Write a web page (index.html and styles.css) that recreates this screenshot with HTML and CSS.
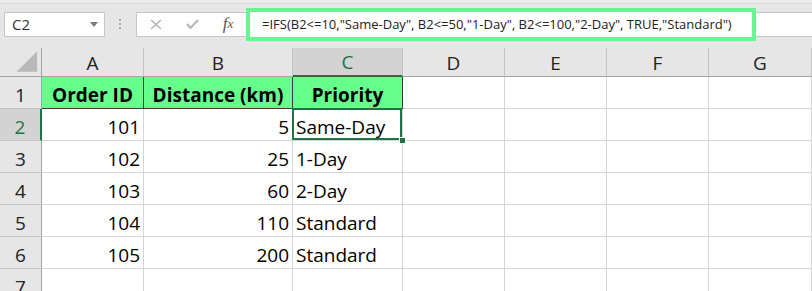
FILE: index.html
```html
<!DOCTYPE html>
<html lang="en">
<head>
  <meta charset="UTF-8">
  <title>IFS formula - Priority</title>
  <link rel="stylesheet" href="styles.css">
</head>
<body>
  <div class="topbar">
    <div class="namebox">
      <span>C2</span>
      <span class="caret"></span>
    </div>
    <div class="grip">
      <svg width="3" height="11" viewBox="0 0 3 11">
        <rect x="0" y="0" width="2" height="2" fill="#a8a8a8"/>
        <rect x="0" y="4" width="2" height="2" fill="#a8a8a8"/>
        <rect x="0" y="8" width="2" height="2" fill="#a8a8a8"/>
      </svg>
    </div>
    <div class="fbar">
      <div class="fbtns">
        <span class="fbtn">
          <svg width="12" height="11" viewBox="0 0 12 11">
            <path d="M1 1 L11 10 M11 1 L1 10" stroke="#b5b5b5" stroke-width="1.6" fill="none"/>
          </svg>
        </span>
        <span class="fbtn">
          <svg width="13" height="10" viewBox="0 0 13 10">
            <path d="M1 5 L4.5 9 L12 1" stroke="#b5b5b5" stroke-width="2" fill="none"/>
          </svg>
        </span>
        <span class="fbtn fx">f<small>x</small></span>
      </div>
      <div class="formula">=IFS(B2&lt;=10,"Same-Day", B2&lt;=50,"1-Day", B2&lt;=100,"2-Day", TRUE,"Standard")</div>
    </div>
  </div>

  <div class="sheet">
    <div class="corner">
      <svg width="42" height="28" viewBox="0 0 42 28">
        <polygon points="17,24 38,24 38,3" fill="#b8b8b8"/>
      </svg>
    </div>
    <div class="hd">A</div>
    <div class="hd">B</div>
    <div class="hd on">C</div>
    <div class="hd">D</div>
    <div class="hd">E</div>
    <div class="hd">F</div>
    <div class="hd">G</div>

    <div class="rh">1</div>
    <div class="head">Order ID</div>
    <div class="head">Distance (km)</div>
    <div class="head">Priority</div>
    <div></div><div></div><div></div><div></div>

    <div class="rh on">2</div>
    <div class="num">101</div>
    <div class="num">5</div>
    <div class="sel">Same-Day</div>
    <div></div><div></div><div></div><div></div>

    <div class="rh">3</div>
    <div class="num">102</div>
    <div class="num">25</div>
    <div>1-Day</div>
    <div></div><div></div><div></div><div></div>

    <div class="rh">4</div>
    <div class="num">103</div>
    <div class="num">60</div>
    <div>2-Day</div>
    <div></div><div></div><div></div><div></div>

    <div class="rh">5</div>
    <div class="num">104</div>
    <div class="num">110</div>
    <div>Standard</div>
    <div></div><div></div><div></div><div></div>

    <div class="rh">6</div>
    <div class="num">105</div>
    <div class="num">200</div>
    <div>Standard</div>
    <div></div><div></div><div></div><div></div>

    <div class="rh">7</div>
    <div></div><div></div><div></div>
    <div></div><div></div><div></div><div></div>
  </div>
</body>
</html>
```

FILE: styles.css
```css
/* Excel-like sheet with formula bar */
body {
  margin: 0;
  width: 812px;
  height: 291px;
  overflow: hidden;
  background: #fff;
  font-family: "Open Sans", sans-serif;
  color: #000;
}

.topbar {
  display: flex;
  align-items: center;
  height: 48px;
  background: linear-gradient(#ececec 0, #ececec 3px, #d8d8d8 3px, #d8d8d8 4px, #e6e6e6 4px);
}

.namebox {
  box-sizing: border-box;
  width: 101px;
  height: 25px;
  margin-left: 4px;
  padding: 0 6px 0 7px;
  display: flex;
  align-items: center;
  justify-content: space-between;
  background: #fff;
  border: 1px solid #c6c6c6;
  font-size: 15px;
  color: #333;
}
.caret {
  width: 0;
  height: 0;
  border-left: 4px solid transparent;
  border-right: 4px solid transparent;
  border-top: 5px solid #7a7a7a;
}

.grip {
  width: 31px;
  display: flex;
  justify-content: center;
}

.fbar {
  flex: 1;
  box-sizing: border-box;
  height: 25px;
  display: flex;
  align-items: center;
  background: #fff;
  border: 1px solid #c6c6c6;
  border-right: 0;
}
.fbtns {
  width: 108px;
  padding-left: 1px;
  display: flex;
}
.fbtn {
  width: 36px;
  display: flex;
  justify-content: center;
  align-items: center;
}
.fx {
  font-family: "Liberation Serif", serif;
  font-style: italic;
  font-size: 17px;
  color: #555;
  line-height: 16px;
}
.fx small {
  font-size: 13px;
}

.formula {
  box-sizing: border-box;
  width: 510px;
  height: 33px;
  padding-left: 12px;
  display: flex;
  align-items: center;
  background: #fff;
  border: 4px solid #6cf28e;
  font-size: 13px;
  color: #222;
  white-space: nowrap;
}

.sheet {
  display: grid;
  grid-template-columns: 42px 102px 149px 110px 102px 102px 102px 1fr;
  grid-template-rows: 29px repeat(7, 32px);
}
.sheet > div {
  box-sizing: border-box;
  display: flex;
  align-items: flex-end;
  padding: 0 3px;
  border-right: 1px solid #d4d4d4;
  border-bottom: 1px solid #d4d4d4;
  font-size: 19px;
  line-height: 26px;
  white-space: nowrap;
}

.sheet > .corner {
  padding: 0;
  background: #e6e6e6;
  border-right-color: #a3a3a3;
  border-bottom-color: #a3a3a3;
}
.sheet > .hd {
  justify-content: center;
  background: #e6e6e6;
  color: #222;
  border-right-color: #c4c4c4;
  border-bottom-color: #a3a3a3;
}
.sheet > .rh {
  justify-content: center;
  background: #e6e6e6;
  color: #222;
  border-right-color: #a3a3a3;
  border-bottom-color: #c4c4c4;
}
.sheet > .hd.on {
  background: #d3d3d3;
  color: #217346;
  border-bottom: 2px solid #217346;
}
.sheet > .rh.on {
  background: #d3d3d3;
  color: #217346;
  border-right: 2px solid #217346;
}

.sheet > .head {
  justify-content: center;
  background: #66ff8c;
  font-weight: 700;
  border-right-color: #3c3c3c;
  border-bottom-color: #3c3c3c;
}
.sheet > .num {
  justify-content: flex-end;
}

.sheet > .sel {
  position: relative;
  z-index: 1;
}
.sel::after {
  content: "";
  position: absolute;
  top: -1px;
  left: -1px;
  right: 0;
  bottom: 0;
  border: 2px solid #217346;
}
.sel::before {
  content: "";
  position: absolute;
  right: -4px;
  bottom: -4px;
  width: 5px;
  height: 5px;
  background: #217346;
  border: 1px solid #fff;
  z-index: 2;
}
```
